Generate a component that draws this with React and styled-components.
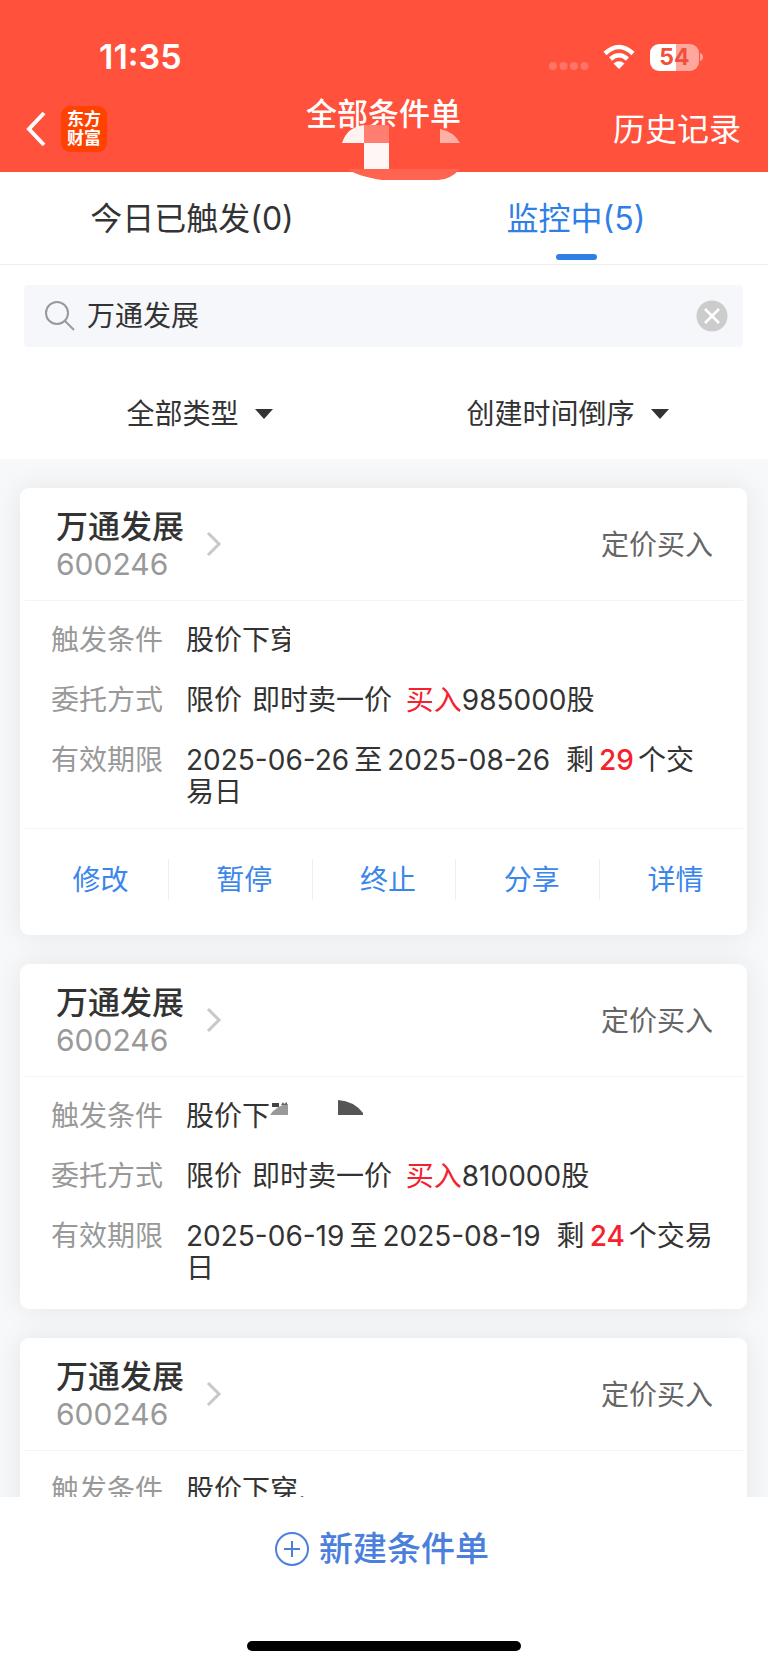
import { useState } from "react";
import styled, { createGlobalStyle } from "styled-components";

const orders = [
  {
    id: 1,
    name: "万通发展",
    code: "600246",
    type: "定价买入",
    trigger: "股价下",
    cut: true,
    amount: "985000",
    from: "2025-06-26",
    to: "2025-08-26",
    days: 29,
    open: true,
  },
  {
    id: 2,
    name: "万通发展",
    code: "600246",
    type: "定价买入",
    trigger: "股价下",
    masked: true,
    amount: "810000",
    from: "2025-06-19",
    to: "2025-08-19",
    days: 24,
  },
  {
    id: 3,
    name: "万通发展",
    code: "600246",
    type: "定价买入",
    trigger: "股价下穿.",
  },
];

const actions = ["修改", "暂停", "终止", "分享", "详情"];

const StatusIcons = () => (
  <Status>
    <svg width="40" height="8" viewBox="0 0 40 8" fill="#ff7565">
      <circle cx="4" cy="4" r="4" />
      <circle cx="14.500" cy="4" r="4" />
      <circle cx="25" cy="4" r="4" />
      <circle cx="35.500" cy="4" r="4" />
    </svg>
    <svg width="34" height="26" viewBox="0 0 34 26">
      <path
        d="M3 9.500 Q17 -3.500 31 9.500 M8.500 15 Q17 7.500 25.500 15"
        fill="none"
        stroke="#fff"
        strokeWidth="4.500"
      />
      <path d="M11.500 19.500 Q17 15 22.500 19.500 L17 25 Z" fill="#fff" />
    </svg>
    <Battery>
      <Level>54</Level>
      <svg width="3" height="8" viewBox="0 0 3 8">
        <path d="M0 0 Q3 1 3 4 Q3 7 0 8 Z" fill="#ffa79c" />
      </svg>
    </Battery>
  </Status>
);

const Chevron = () => (
  <svg width="16" height="26" viewBox="0 0 16 26">
    <path d="M2 2 L13 13 L2 24" fill="none" stroke="#c8c8c8" strokeWidth="3" />
  </svg>
);

const Caret = () => (
  <svg width="20" height="12" viewBox="0 0 20 12">
    <path d="M1 1 H19 L10 11 Z" fill="#333" />
  </svg>
);

const Order = ({ order }) => {
  return (
    <Card>
      <CardHead>
        <Stock href="#stock">
          <div>
            <Name>{order.name}</Name>
            <Code>{order.code}</Code>
          </div>
          <Chevron />
        </Stock>
        <Type>{order.type}</Type>
      </CardHead>
      <Rows>
        <Label>触发条件</Label>
        <Value>
          {order.trigger}
          {order.cut && <Cut>穿</Cut>}
          {order.masked && (
            <Mask width="96" height="20" viewBox="0 0 96 20">
              <path d="M2 3 H9 V7 H2 Z" fill="#444" />
              <path d="M0 15 Q7 5 18 4 V15 Z" fill="#999" />
              <path d="M11 5 L13 2 L14 4 L17 2 V5 Z" fill="#666" />
              <path d="M68 0 Q84 1 93 13 V15 H68 Z" fill="#555" />
            </Mask>
          )}
        </Value>
        {order.amount && (
          <>
            <Label>委托方式</Label>
            <Value>
              限价 <Price>即时卖一价</Price> <Side>买入</Side>
              {order.amount}股
            </Value>
            <Label>有效期限</Label>
            <Value>
              {order.from}
              <To>至</To>
              {order.to} <Left>剩</Left>
              <Days>{order.days}</Days>
              个交易日
            </Value>
          </>
        )}
      </Rows>
      {order.open && (
        <Actions>
          {actions.map((action) => (
            <Action key={action}>
              <button type="button">{action}</button>
            </Action>
          ))}
        </Actions>
      )}
    </Card>
  );
};

const App = () => {
  const [keyword, setKeyword] = useState("万通发展");
  return (
    <Page>
      <GlobalStyle />
      <Header>
        <StatusBar>
          <Time>11:35</Time>
          <StatusIcons />
        </StatusBar>
        <Nav>
          <NavLeft>
            <Back type="button" aria-label="返回">
              <svg width="20" height="36" viewBox="0 0 20 36">
                <path
                  d="M18 2 L3 18 L18 34"
                  fill="none"
                  stroke="#fff"
                  strokeWidth="4"
                />
              </svg>
            </Back>
            <Logo>
              东方
              <br />
              财富
            </Logo>
          </NavLeft>
          <Title>
            全部条件单
            <Mosaic width="122" height="58" viewBox="0 0 122 58">
              <path d="M0 18 Q5 2 22 0 V18 Z" fill="#fff3f1" />
              <path d="M22 0 H47 V18 H22 Z" fill="#ff7e70" />
              <path d="M22 18 H47 V44 H22 Z" fill="#fff6f5" />
              <path d="M98 4 Q111 6 118 18 H98 Z" fill="#ffb0a6" />
              <path d="M6 44 H118 Q108 55 96 55 H40 Q14 51 6 44 Z" fill="#ff6450" />
            </Mosaic>
          </Title>
          <History href="#history">历史记录</History>
        </Nav>
      </Header>
      <Tabs>
        <Tab type="button">今日已触发(0)</Tab>
        <Tab type="button" $active>
          监控中(5)
        </Tab>
      </Tabs>
      <SearchBox>
        <svg width="30" height="30" viewBox="0 0 30 30" fill="none" stroke="#999" strokeWidth="2">
          <circle cx="12" cy="12" r="11" />
          <path d="M20 20 L29 29" />
        </svg>
        <input
          aria-label="搜索"
          value={keyword}
          onChange={(e) => setKeyword(e.target.value)}
        />
        <button type="button" aria-label="清除" onClick={() => setKeyword("")}>
          <svg width="32" height="32" viewBox="0 0 32 32">
            <circle cx="16" cy="16" r="15.500" fill="#ccc" />
            <path d="M9 9 L23 23 M23 9 L9 23" stroke="#fff" strokeWidth="2.500" />
          </svg>
        </button>
      </SearchBox>
      <Filters>
        <Filter>
          <select aria-label="类型">
            <option>全部类型</option>
          </select>
          <Caret />
        </Filter>
        <Filter>
          <select aria-label="排序">
            <option>创建时间倒序</option>
          </select>
          <Caret />
        </Filter>
      </Filters>
      <List>
        {orders.map((order) => (
          <Order key={order.id} order={order} />
        ))}
      </List>
      <Footer>
        <Create type="button">
          <svg width="34" height="34" viewBox="0 0 34 34" fill="none" stroke="#4a80dc" strokeWidth="2">
            <circle cx="17" cy="17" r="16" />
            <path d="M17 9 V25 M9 17 H25" />
          </svg>
          新建条件单
        </Create>
        <HomeBar />
      </Footer>
    </Page>
  );
};

const GlobalStyle = createGlobalStyle`
  * {
    box-sizing: border-box;
  }
  body {
    margin: 0;
    font-family: Inter, "Noto Sans CJK SC", sans-serif;
    font-size: 28px;
    line-height: 32px;
    color: #333;
    background: #fff;
  }
  button, input, select {
    font: inherit;
    color: inherit;
    border: none;
    background: none;
    padding: 0;
    margin: 0;
  }
  a {
    color: inherit;
    text-decoration: none;
  }
  svg {
    display: block;
    flex: none;
  }
`;
const Page = styled.div`
  display: flex;
  flex-direction: column;
  height: 100vh;
`;
const Header = styled.header`
  background: #ff513b;
  color: #fff;
  height: 172px;
`;
const StatusBar = styled.div`
  display: flex;
  justify-content: space-between;
  align-items: center;
  height: 86px;
  padding: 28px 65px 0 99px;
`;
const Time = styled.div`
  font-size: 34px;
  font-weight: 600;
`;
const Status = styled.div`
  display: flex;
  align-items: center;
  & > svg:first-child {
    margin: 17px 13px 0 0;
  }
`;
const Battery = styled.div`
  display: flex;
  align-items: center;
  gap: 1px;
  margin-left: 14px;
`;
const Level = styled.div`
  width: 49px;
  height: 27px;
  border-radius: 9px;
  background: linear-gradient(90deg, #fff 54%, #ffa79c 54%);
  color: #f0503c;
  font-size: 23px;
  font-weight: 700;
  line-height: 27px;
  text-align: center;
`;
const Nav = styled.nav`
  display: grid;
  grid-template-columns: 1fr auto 1fr;
  height: 86px;
  padding: 0 27px 0 26px;
`;
const NavLeft = styled.div`
  display: flex;
  align-items: center;
  gap: 15px;
`;
const Back = styled.button`
  cursor: pointer;
`;
const Logo = styled.div`
  width: 46px;
  height: 46px;
  padding-top: 4px;
  border-radius: 9px;
  background: #ff4200;
  font-size: 17px;
  font-weight: 700;
  line-height: 19px;
  text-align: center;
`;
const Title = styled.h1`
  position: relative;
  margin: 0;
  padding-top: 12px;
  font-size: 31px;
  font-weight: 500;
`;
const Mosaic = styled.svg`
  position: absolute;
  left: 36px;
  top: 39px;
`;
const History = styled.a`
  align-self: center;
  justify-self: end;
  padding-top: 2px;
  font-size: 32px;
`;
const Tabs = styled.div`
  display: flex;
  border-bottom: 1px solid #eee;
`;
const Tab = styled.button`
  display: flex;
  flex-direction: column;
  align-items: center;
  justify-content: space-between;
  flex: 1;
  height: 92px;
  padding: 31px 0 4px;
  font-size: 32px;
  color: ${({ $active }) => ($active ? "#2f7fe6" : "#333")};
  cursor: pointer;
  &::after {
    content: "";
    width: 41px;
    height: 6px;
    border-radius: 3px;
    background: ${({ $active }) => ($active ? "#2f7fe6" : "transparent")};
  }
`;
const SearchBox = styled.div`
  display: flex;
  align-items: center;
  gap: 12px;
  height: 62px;
  margin: 20px 25px 0 24px;
  padding: 0 15px 0 21px;
  border-radius: 4px;
  background: #f6f7fa;
  input {
    flex: 1;
    min-width: 0;
    outline: none;
  }
`;
const Filters = styled.div`
  display: grid;
  grid-template-columns: 1fr 1fr;
  height: 112px;
  padding: 22px 16px 0;
`;
const Filter = styled.label`
  display: flex;
  align-items: center;
  justify-content: center;
  gap: 14px;
  select {
    appearance: none;
    outline: none;
    line-height: 44px;
  }
`;
const List = styled.main`
  display: flex;
  flex-direction: column;
  gap: 29px;
  flex: 1;
  min-height: 0;
  padding: 29px 21px 0 20px;
  overflow-y: auto;
  scrollbar-width: none;
  background: #f6f8fa;
`;
const Card = styled.section`
  flex: none;
  padding: 0 4px 5px 5px;
  border-radius: 9px;
  background: #fff;
  box-shadow: 0 0 28px rgba(0, 0, 0, 0.08);
`;
const CardHead = styled.div`
  display: flex;
  align-items: center;
  justify-content: space-between;
  height: 113px;
  padding: 0 30px 0 31px;
  border-bottom: 1px solid #f3f3f3;
`;
const Stock = styled.a`
  display: flex;
  align-items: center;
  gap: 22px;
`;
const Name = styled.div`
  padding-top: 2px;
  font-size: 32px;
  font-weight: 500;
  line-height: 38px;
`;
const Code = styled.div`
  font-size: 30px;
  line-height: 36px;
  color: #999;
`;
const Type = styled.div`
  padding-top: 2px;
  color: #666;
`;
const Rows = styled.div`
  display: grid;
  grid-template-columns: 114px 1fr;
  column-gap: 21px;
  row-gap: 28px;
  padding: 23px 28px 20px 26px;
`;
const Label = styled.div`
  color: #999;
  white-space: nowrap;
`;
const Value = styled.div`
  color: #333;
`;
const Price = styled.span`
  margin: 0 2px;
`;
const Side = styled.span`
  margin-left: 4px;
  color: #f5222d;
`;
const To = styled.span`
  margin: 0 5px;
`;
const Left = styled.span`
  margin: 0 5px 0 8px;
`;
const Days = styled.span`
  margin-right: 4px;
  color: #f5222d;
  font-weight: 500;
`;
const Cut = styled.span`
  display: inline-block;
  width: 20px;
  height: 32px;
  overflow: hidden;
  vertical-align: top;
`;
const Mask = styled.svg`
  display: inline-block;
  vertical-align: top;
`;
const Actions = styled.div`
  display: flex;
  align-items: center;
  height: 102px;
  border-top: 1px solid #f3f3f3;
`;
const Action = styled.div`
  flex: 1;
  height: 41px;
  padding-left: 8px;
  border-right: 1px solid #eee;
  text-align: center;
  color: #3b86ea;
  &:last-child {
    border-right: none;
  }
  button {
    line-height: 43px;
    cursor: pointer;
  }
`;
const Footer = styled.footer`
  display: flex;
  flex-direction: column;
  align-items: center;
  justify-content: space-between;
  height: 170px;
  padding: 32px 0 16px;
  background: #fff;
`;
const Create = styled.button`
  display: flex;
  align-items: center;
  gap: 10px;
  padding-right: 4px;
  font-size: 34px;
  font-weight: 500;
  line-height: 40px;
  color: #4a80dc;
  cursor: pointer;
`;
const HomeBar = styled.div`
  width: 274px;
  height: 10px;
  border-radius: 5px;
  background: #000;
`;
export default App;
